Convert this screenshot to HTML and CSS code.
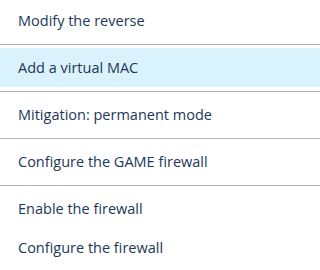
FILE: index.html
```html
<!DOCTYPE html>
<html lang="en">
<head>
<meta charset="utf-8">
<title>Menu</title>
<link rel="stylesheet" href="styles.css">
</head>
<body>
<div class="menu">
  <ul class="group">
    <li class="item"><a class="link" href="#">Modify the reverse</a></li>
    <li class="item"><a class="link link-active" href="#">Add a virtual MAC</a></li>
    <li class="item"><a class="link" href="#">Mitigation: permanent mode</a></li>
    <li class="item"><a class="link" href="#">Configure the GAME firewall</a></li>
  </ul>
  <ul class="group group-plain">
    <li class="item-plain"><a class="link" href="#">Enable the firewall</a></li>
    <li class="item-plain"><a class="link" href="#">Configure the firewall</a></li>
  </ul>
</div>
</body>
</html>
```
FILE: styles.css
```css
html, body {
  margin: 0;
  padding: 0;
  background: #ffffff;
}
body {
  font-family: "Open Sans", "Liberation Sans", sans-serif;
  font-size: 14.5px;
  color: #21375a;
  overflow: hidden;
}
.menu {
  margin-top: -2px;
}
.group {
  list-style: none;
  margin: 0;
  padding: 0;
}
.item {
  padding: 3px 0 4px;
  border-bottom: 1px solid #b3b3b3;
}
.link {
  display: block;
  height: 39px;
  line-height: 39px;
  padding-left: 18px;
  color: inherit;
  text-decoration: none;
  white-space: nowrap;
}
.link-active {
  background: #d9f2fc;
}
.group-plain {
  padding-top: 3px;
}
```
